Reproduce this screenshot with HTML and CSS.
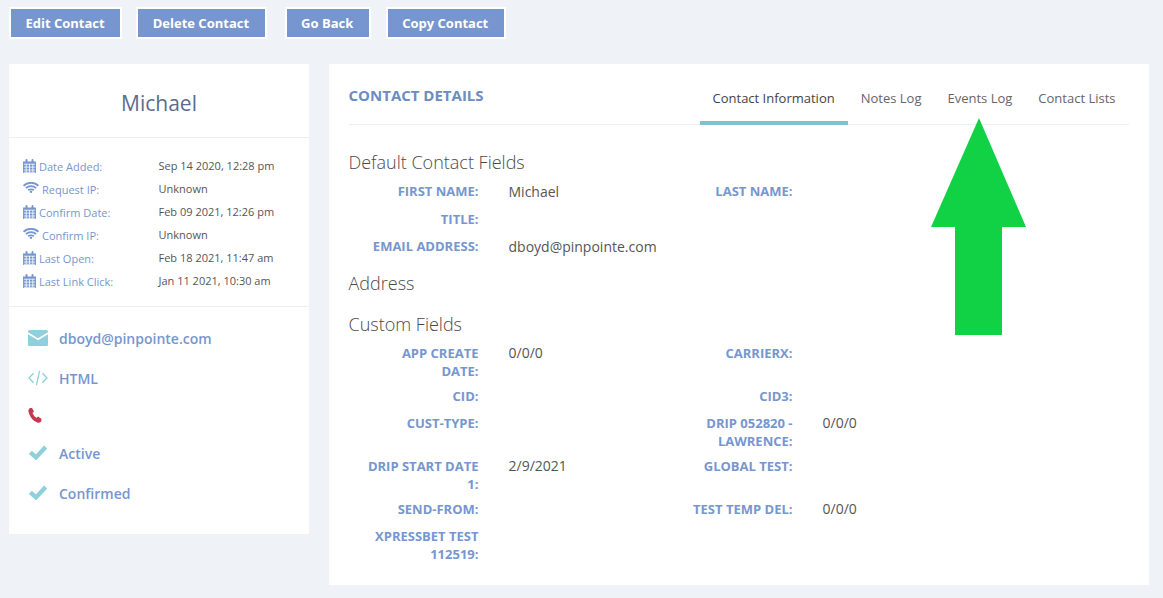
FILE: index.html
```html
<!DOCTYPE html>
<html lang="en">
<head>
<meta charset="utf-8">
<title>Contact Details</title>
<link rel="stylesheet" href="styles.css">
</head>
<body>
<svg class="defs" width="0" height="0" aria-hidden="true">
  <symbol id="cal" viewBox="0 0 13 14">
    <path d="M0 2.500h2.500V1q0-1 1-1t1 1v1.500h4V1q0-1 1-1t1 1v1.500H13V14H0z" fill="currentColor"/>
    <path d="M.8 5.200h11.400M.8 8.100h11.400M.8 11h11.400M.8 13.300h11.400M3.200 5v8.500M6.500 5v8.500M9.800 5v8.500" stroke="#fff" stroke-width=".8" fill="none"/>
  </symbol>
  <symbol id="wifi" viewBox="0 0 16 11">
    <path d="M.6 3.800C4.600-.2 11.400-.2 15.400 3.800M2.900 6.100C5.600 3.500 10.400 3.500 13.100 6.100M5.200 8.300C6.700 7 9.300 7 10.800 8.300" fill="none" stroke="currentColor" stroke-width="1.900"/>
    <circle cx="8" cy="9.800" r="1.200" fill="currentColor"/>
  </symbol>
  <symbol id="check" viewBox="0 0 17 14">
    <path d="M1.800 7.300l4.900 4.400L15.200 2.600" fill="none" stroke="currentColor" stroke-width="3.800"/>
  </symbol>
</svg>
<nav class="toolbar">
  <a class="btn btn-edit">Edit Contact</a>
  <a class="btn btn-delete">Delete Contact</a>
  <a class="btn btn-back">Go Back</a>
  <a class="btn">Copy Contact</a>
</nav>
<main class="layout">
  <aside class="card side">
    <h2 class="name">Michael</h2>
    <dl class="meta">
      <dt><svg class="ic-cal"><use href="#cal"/></svg>Date Added:</dt><dd>Sep 14 2020, 12:28 pm</dd>
      <dt><svg class="ic-wifi"><use href="#wifi"/></svg>Request IP:</dt><dd>Unknown</dd>
      <dt><svg class="ic-cal"><use href="#cal"/></svg>Confirm Date:</dt><dd>Feb 09 2021, 12:26 pm</dd>
      <dt><svg class="ic-wifi"><use href="#wifi"/></svg>Confirm IP:</dt><dd>Unknown</dd>
      <dt><svg class="ic-cal"><use href="#cal"/></svg>Last Open:</dt><dd>Feb 18 2021, 11:47 am</dd>
      <dt><svg class="ic-cal"><use href="#cal"/></svg>Last Link Click:</dt><dd>Jan 11 2021, 10:30 am</dd>
    </dl>
    <ul class="facts">
      <li class="fact f-mail"><svg class="fi" viewBox="0 0 20 16"><path d="M1.500 0h17Q20 0 20 1.500v.7l-10 6-10-6v-.7Q0 0 1.500 0zM0 4.300l10 6 10-6v10.200q0 1.500-1.500 1.500h-17Q0 16 0 14.500z" fill="currentColor"/></svg>dboyd@pinpointe.com</li>
      <li class="fact f-html"><svg class="fi" viewBox="0 0 20 16"><path d="M5.600 3.200L1 8l4.600 4.800M14.400 3.200L19 8l-4.600 4.800M11.600.8L8.400 15.200" fill="none" stroke="currentColor" stroke-width="1.300"/></svg>HTML</li>
      <li class="fact f-phone"><svg class="fi phone" viewBox="0 0 20 16"><path d="M1.600.3L3.900-.2l2.100 3.700-1.500 1.500q.9 2.800 3.900 4.700l1.700-1.200 3.500 2.600-.6 2.600q-1.400 1.500-3.300 1Q2.800 12.500.4 3.500q-.2-2 1.200-3.200z" fill="currentColor"/></svg></li>
      <li class="fact f-active"><svg class="fi ic-check"><use href="#check"/></svg>Active</li>
      <li class="fact f-confirmed"><svg class="fi ic-check"><use href="#check"/></svg>Confirmed</li>
    </ul>
  </aside>
  <section class="card details">
    <header class="details-head">
      <h1 class="title">CONTACT DETAILS</h1>
      <ul class="tabs">
        <li class="tab tab-active">Contact Information</li>
        <li class="tab">Notes Log</li>
        <li class="tab">Events Log</li>
        <li class="tab">Contact Lists</li>
      </ul>
    </header>
    <h3 class="section s-default">Default Contact Fields</h3>
    <div class="fields fields-default">
      <div class="k">First Name:</div><div class="v">Michael</div><div class="k">Last Name:</div><div class="v"></div>
      <div class="k">Title:</div><div class="v"></div><div class="k"></div><div class="v"></div>
      <div class="k">Email Address:</div><div class="v">dboyd@pinpointe.com</div><div class="k"></div><div class="v"></div>
    </div>
    <h3 class="section s-address">Address</h3>
    <h3 class="section s-custom">Custom Fields</h3>
    <div class="fields">
      <div class="k">App Create Date:</div><div class="v">0/0/0</div><div class="k">CarrierX:</div><div class="v"></div>
      <div class="k">CID:</div><div class="v"></div><div class="k">CID3:</div><div class="v"></div>
      <div class="k">Cust-Type:</div><div class="v"></div><div class="k">Drip 052820 - Lawrence:</div><div class="v">0/0/0</div>
      <div class="k">Drip Start Date 1:</div><div class="v">2/9/2021</div><div class="k">Global Test:</div><div class="v"></div>
      <div class="k">Send-From:</div><div class="v"></div><div class="k">Test Temp Del:</div><div class="v">0/0/0</div>
      <div class="k">XpressBet Test 112519:</div><div class="v"></div><div class="k"></div><div class="v"></div>
    </div>
  </section>
</main>
<svg class="arrow" viewBox="0 0 95 217" width="95" height="217" aria-hidden="true"><path d="M48 0L95 109H71V217H24V109H0z" fill="#10d244"/></svg>
</body>
</html>
```
FILE: styles.css
```css
* { box-sizing: border-box; }
html, body { margin: 0; height: 100%; }
body {
  background: #eff3f8;
  font-family: "Open Sans", "Liberation Sans", sans-serif;
  color: #555;
  overflow: hidden;
  position: relative;
  padding: 7px 9px 0;
}
.defs { position: absolute; }
h1, h2, h3, dl, dd, ul { margin: 0; padding: 0; font-weight: normal; }
ul { list-style: none; }

.toolbar { display: flex; height: 32px; }
.btn {
  display: block;
  height: 32px;
  padding: 0 15.5px 0 14.5px;
  border: 2px solid #fff;
  background: #7796d0;
  color: #fff;
  font-size: 13px;
  font-weight: 700;
  line-height: 28px;
  margin-right: 15px;
}
.btn-edit { margin-right: 14px; }
.btn-delete { margin-right: 18px; }

.layout { display: flex; gap: 20px; align-items: flex-start; margin-top: 25px; }
.card { background: #fff; }
.side { width: 300px; height: 470px; flex: none; }
.details { width: 820px; height: 521px; flex: none; padding: 0 20.5px 0 19.5px; }

.name {
  height: 74px;
  border-bottom: 1px solid #eceef2;
  text-align: center;
  font-size: 21px;
  line-height: 78px;
  color: #5d6b8c;
}
.meta {
  display: grid;
  grid-template-columns: 135.5px 1fr;
  grid-auto-rows: 23px;
  padding: 17px 0 13px 14px;
  height: 169px;
  border-bottom: 1px solid #eceef2;
  font-size: 11px;
  line-height: 23px;
}
.meta dt { color: #7696cf; white-space: nowrap; display: flex; align-items: center; }
.meta dd { color: #555; position: relative; top: -1px; }
.ic-cal { width: 13px; height: 14px; margin-right: 3px; color: #7696cf; position: relative; top: -1px; }
.ic-wifi { width: 16px; height: 11px; margin-right: 3px; color: #7696cf; position: relative; top: -2px; }

.facts { padding-left: 19px; }
.fact {
  display: flex;
  align-items: center;
  font-size: 14px;
  font-weight: 600;
  color: #7696cf;
  height: 20px;
}
.fi { width: 20px; height: 16px; margin-right: 11px; color: #8fd0dc; flex: none; }
.ic-check { position: relative; top: -1px; }
.f-mail { margin-top: 21px; }
.f-html { margin-top: 20px; }
.f-phone { margin-top: 18px; }
.f-active { margin-top: 17px; }
.f-confirmed { margin-top: 20px; }
.phone { color: #c43a4d; }

.details-head {
  display: flex;
  justify-content: space-between;
  height: 61px;
  border-bottom: 1px solid #eceef2;
}
.title {
  font-size: 15px;
  font-weight: 700;
  color: #6c8cc2;
  line-height: 62px;
}
.tabs { display: flex; font-size: 13px; color: #666; }
.tab { padding: 0 13px; line-height: 68px; height: 61px; }
.tab-active { color: #444; border-bottom: 4px solid #7cc3d1; }

.section { font-size: 18px; font-weight: 300; color: #4a4a4a; line-height: 25px; }
.s-default { margin-top: 25px; }
.s-address { margin-top: 6px; }
.s-custom { margin-top: 16px; }

.fields {
  display: grid;
  grid-template-columns: 130px 184px 130px 1fr;
  padding-top: 7px;
}
.k {
  padding-left: 15px;
  text-align: right;
  font-size: 13px;
  font-weight: 700;
  color: #7696cf;
  text-transform: uppercase;
  line-height: 18px;
  margin-bottom: 7px;
}
.v {
  padding-left: 30px;
  font-size: 14px;
  color: #555;
  line-height: 18px;
  min-height: 20px;
  margin-bottom: 7px;
}
.fields-default .v { min-height: 20.5px; line-height: 19px; }

.arrow { position: absolute; left: 931px; top: 118px; }
```
